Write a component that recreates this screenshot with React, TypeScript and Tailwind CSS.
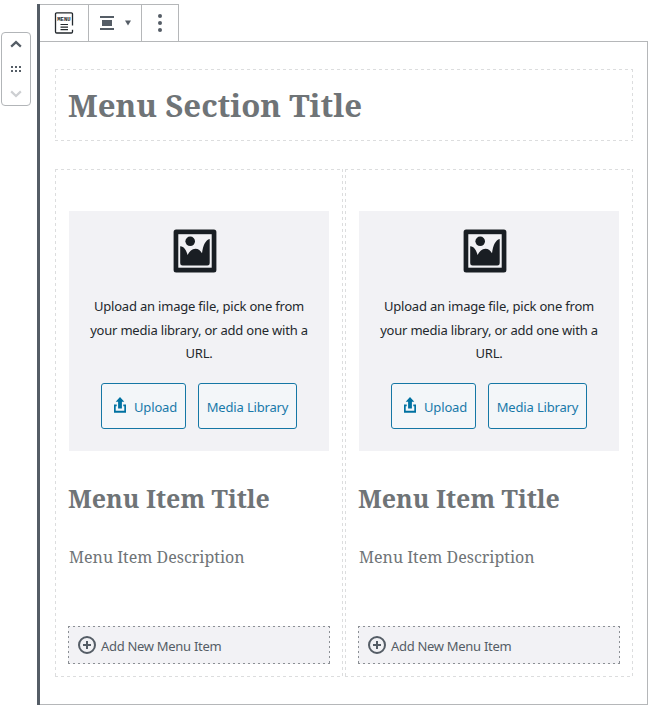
import React from "react";

const serif = "font-['Noto_Serif','DejaVu_Serif',serif]";

// One-pixel dashed outlines with fixed dash lengths, painted as four repeating edges.
const lightDashes =
  "[background-image:repeating-linear-gradient(90deg,#dcddde_0_3px,transparent_3px_6px),repeating-linear-gradient(90deg,#dcddde_0_3px,transparent_3px_6px),repeating-linear-gradient(180deg,#dcddde_0_3px,transparent_3px_6px),repeating-linear-gradient(180deg,#dcddde_0_3px,transparent_3px_6px)] [background-size:100%_1px,100%_1px,1px_100%,1px_100%] [background-position:left_top,left_bottom,left_top,right_top] bg-no-repeat";
const darkDashes =
  "[background-image:repeating-linear-gradient(90deg,#8b8f94_0_2px,transparent_2px_5px),repeating-linear-gradient(90deg,#8b8f94_0_2px,transparent_2px_5px),repeating-linear-gradient(180deg,#8b8f94_0_2px,transparent_2px_5px),repeating-linear-gradient(180deg,#8b8f94_0_2px,transparent_2px_5px)] [background-size:100%_1px,100%_1px,1px_100%,1px_100%] [background-position:left_top,left_bottom,left_top,right_top] bg-no-repeat";

function Mover() {
  return (
    <div className="mt-8 ml-px flex h-[74px] w-[30px] shrink-0 flex-col items-center rounded-[4px] border border-[#b2b5b8]">
      <svg className="mt-[3px]" width="18" height="18" viewBox="0 0 18 18" fill="#555d66">
        <path d="M9 4.5 L3.4 9.8 L4.9 11.5 L9 7.7 L13.1 11.5 L14.6 9.8 Z" />
      </svg>
      <svg className="mt-[6px]" width="18" height="18" viewBox="0 0 18 18" fill="#555d66">
        <path d="M4 6h2v2H4zM8 6h2v2H8zM12 6h2v2h-2zM4 10h2v2H4zM8 10h2v2H8zM12 10h2v2h-2z" />
      </svg>
      <svg className="mt-[6px]" width="18" height="18" viewBox="0 0 18 18" fill="#cdcfd2">
        <path d="M9 13.6 L3.4 8.3 L4.9 6.6 L9 10.4 L13.1 6.6 L14.6 8.3 Z" />
      </svg>
    </div>
  );
}

function Toolbar() {
  return (
    <div className="flex h-[37px] w-[139px] border-t border-r border-[#b5b7b9]">
      <div className="flex w-[49px] items-center justify-center border-r border-[#b5b7b9]">
        <svg width="20" height="24" viewBox="0 0 20 24">
          <path d="M18.5 14.5V3Q18.5 1.8 17.3 1.8H2.7Q1.5 1.8 1.5 3V20.8Q1.5 22 2.7 22H17.3Q18.5 22 18.5 20.8V18.8" fill="none" stroke="#23282d" strokeWidth="1.3" />
          <text x="3.2" y="10" textLength="13.4" lengthAdjust="spacingAndGlyphs" fontSize="5.8" fontWeight="700" fontFamily="Liberation Mono, monospace" fill="#23282d">MENU</text>
          <path d="M6.5 13.5h7.500M6.5 16.100h7.500M6.5 18.600h7.500" stroke="#23282d" strokeWidth="1.2" />
        </svg>
      </div>
      <div className="flex w-[53px] items-center border-r border-[#b5b7b9]">
        <svg className="ml-[10px]" width="16" height="16" viewBox="0 0 16 16" fill="#555d66">
          <path d="M1 1h14v2H1zM3 5h10v6H3zM1 13h14v2H1z" />
        </svg>
        <svg className="ml-[9px]" width="8" height="6" viewBox="0 0 8 6" fill="#555d66">
          <path d="M1 .5h6L4 5.5z" />
        </svg>
      </div>
      <div className="flex flex-1 items-center justify-center">
        <svg width="6" height="20" viewBox="0 0 6 20" fill="#555d66">
          <circle cx="3" cy="3" r="2" />
          <circle cx="3" cy="10" r="2" />
          <circle cx="3" cy="17" r="2" />
        </svg>
      </div>
    </div>
  );
}

function MenuItem() {
  return (
    <div className={`flex h-[508px] w-[288px] flex-col px-[14px] pt-[42px] ${lightDashes}`}>
      <div className="flex h-[240px] w-[260px] flex-col items-center bg-[#f2f2f5] pt-[18px]">
        <svg className="-ml-[8px]" width="44" height="44" viewBox="0 0 44 44">
          <rect x=".6" y=".4" width="42.8" height="43.2" rx="2.5" fill="#191e23" />
          <rect x="5.3" y="5.2" width="33.4" height="33.5" fill="#f2f2f5" />
          <circle cx="17.2" cy="12.3" r="4.8" fill="#191e23" />
          <path d="M7.2 17.3C11 17.3 13.5 21.5 14.5 26C16.5 22 19 19.7 22.3 19.7C25.5 19.7 27.5 21.5 29 24.2C30 16.5 32.5 11 36.7 10V34.2Q36.7 36.5 34.4 36.5H9.5Q7.2 36.5 7.2 34.2Z" fill="#191e23" />
        </svg>
        <p className="mt-[22px] text-center text-[13px] leading-[23.5px] tracking-[-0.2px] whitespace-nowrap text-[#23282d]">
          Upload an image file, pick one from<br />your media library, or add one with a<br />URL.
        </p>
        <div className="mt-[17px] flex gap-3">
          <button className="flex h-[46px] w-[85px] items-center rounded-[3px] border border-[#1577a5] bg-[#f3f6f9] pl-[11px] text-[13px] text-[#1879a9]">
            <svg width="14" height="18" viewBox="0 0 14 18" fill="#0071a1">
              <path d="M7 0L11.3 4.8H8.900V11.5H5.1V4.8H2.700Z" />
              <path d="M1 7.5H3.700V9.300H2.700V13.700H11.3V9.300H10.3V7.5H13V15.800H1Z" />
            </svg>
            <span className="ml-[7px] pt-[4px] tracking-[-0.15px]">Upload</span>
          </button>
          <button className="h-[46px] w-[99px] rounded-[3px] border border-[#1577a5] bg-[#f3f6f9] pt-[4px] text-[13px] tracking-[-0.17px] whitespace-nowrap text-[#1879a9]">
            Media Library
          </button>
        </div>
      </div>
      <h3 className={`mt-[30px] -ml-px text-[25px] leading-[34px] font-bold whitespace-nowrap text-[#6f7477] ${serif}`}>Menu Item Title</h3>
      <p className={`mt-[30px] text-[16px] leading-[24px] whitespace-nowrap text-[#6f7477] ${serif}`}>Menu Item Description</p>
      <div className={`mt-[57px] -ml-px flex h-[38px] w-[262px] items-center bg-[#f2f2f5] pl-[9px] text-[13px] text-[#555d66] ${darkDashes}`}>
        <svg width="20" height="20" viewBox="0 0 20 20" fill="none" stroke="#555d66" strokeWidth="2">
          <circle cx="10" cy="10" r="8" />
          <path d="M6 10h8M10 6v8" />
        </svg>
        <span className="ml-[4px] pt-[3px] tracking-[-0.3px]">Add New Menu Item</span>
      </div>
    </div>
  );
}

export default function App() {
  return (
    <div className="flex h-[715px] w-[649px] overflow-hidden bg-white font-['Noto_Sans',sans-serif]">
      <Mover />
      <div className="mt-1 ml-[6px] h-[701px] w-[611px] border-l-[3px] border-[#555d66]">
        <Toolbar />
        <div className="h-[664px] w-[608px] border-t border-r border-b border-[#b5b7b9] pt-[27px] pl-[15px]">
          <div className={`h-[72px] w-[578px] px-[13px] ${lightDashes}`}>
            <h2 className={`pt-[15px] text-[31.2px] leading-[42px] font-bold whitespace-nowrap text-[#6f7477] ${serif}`}>Menu Section Title</h2>
          </div>
          <div className="mt-[28px] flex gap-[2px]">
            <MenuItem />
            <MenuItem />
          </div>
        </div>
      </div>
    </div>
  );
}
